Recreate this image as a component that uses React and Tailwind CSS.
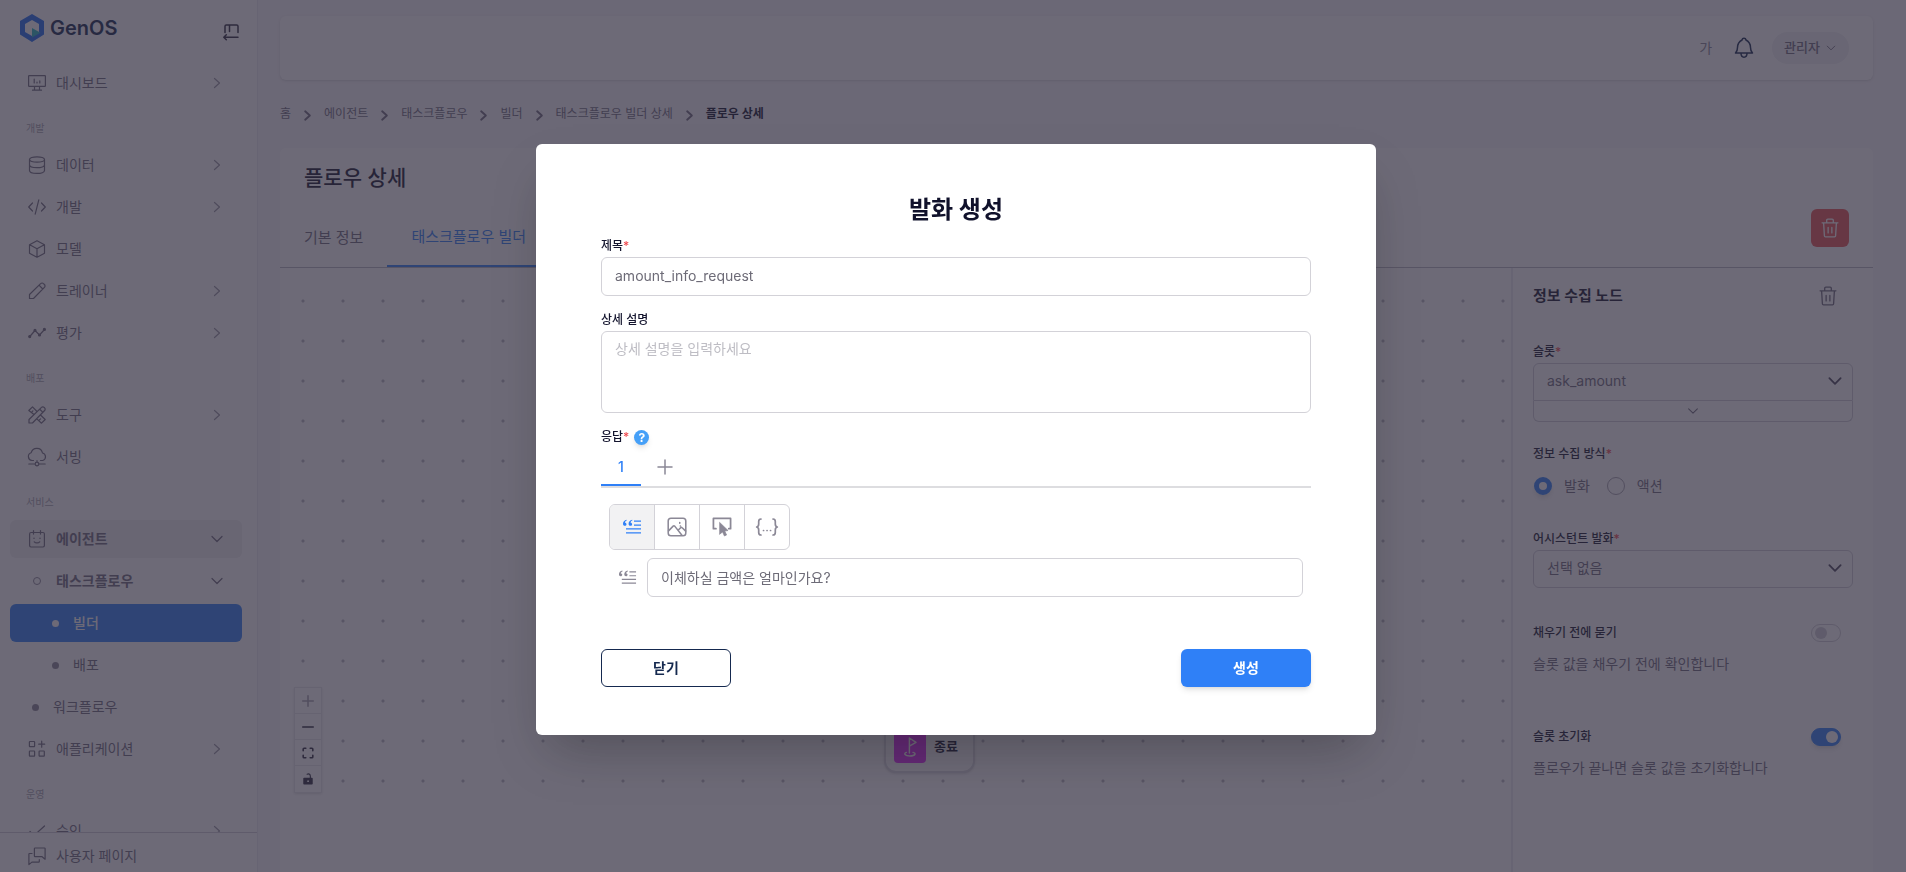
import React, { useState } from "react";
import clsx from "clsx";

const Icon = ({ children, className = "w-5 h-5", box = 20, sw = 1.2 }) => (
    <svg viewBox={`0 0 ${box} ${box}`} className={clsx("shrink-0", className)} fill="none" stroke="currentColor" strokeWidth={sw} strokeLinecap="round" strokeLinejoin="round" aria-hidden="true">
        {children}
    </svg>
);

const icons = {
    dashboard: <path d="M2.2 2.6h15.6a.6.6 0 0 1 .6.6v9.6a.6.6 0 0 1-.6.6H2.2a.6.6 0 0 1-.6-.6V3.2a.6.6 0 0 1 .6-.6zM7.5 13.5V17M12.500 13.500v3.500M5.500 17.200h9M7.200 6v4M10 9v1M12.800 7.800v2.200" />,
    data: <path d="M2.500 4.500c0-1.700 3.300-2.700 7.500-2.700s7.500 1 7.500 2.700-3.300 2.700-7.500 2.700-7.500-1-7.500-2.700zv11c0 1.700 3.300 2.900 7.500 2.900s7.500-1.200 7.500-2.900v-11M2.500 9.800c0 1.700 3.300 2.900 7.500 2.900s7.500-1.200 7.500-2.900" />,
    code: <path d="M5.500 6 1.700 10l3.800 4M14.500 6l3.800 4-3.800 4M11.800 2.800 8.200 17.200" />,
    cube: <path d="M10 1.700 17.500 5.700v8.600L10 18.300 2.500 14.300V5.700zM2.700 5.800 10 9.700l7.300-3.900M10 9.700v8.400" />,
    pencil: <path d="M2.500 17.500v-4L13.600 2.600a2 2 0 0 1 2.900 0l.9.9a2 2 0 0 1 0 2.900L6.500 17.500zM12 4.200l3.800 3.800" />,
    chart: (
        <>
            <path d="M2.800 13.500 8 7.500l4.500 4.500 5-5.500" />
            <g fill="currentColor"><circle cx="2.700" cy="13.600" r="1" /><circle cx="8" cy="7.400" r="1" /><circle cx="12.500" cy="12" r="1" /><circle cx="17.400" cy="6.400" r="1" /></g>
        </>
    ),
    tools: <path d="M2 18v-3.500L14.500 2.400a1.800 1.800 0 0 1 2.600 0l.5.500a1.800 1.800 0 0 1 0 2.600L5.500 18zM7 9.500 1.800 5.500 5.500 1.800 10 6.500M4.500 7.300l1.400-1.400M13.500 10l4.700 4.500-3.700 3.700-4.700-4.300M12.200 15.200l1.400-1.400M13 4.500l2.700 2.700" />,
    cloud: <path d="M6.500 13.500H5a4 4 0 0 1-.8-7.800A5.800 5.800 0 0 1 15.500 6a3.900 3.900 0 0 1 .3 7.500h-2.300M1.800 17h6.300M11.900 17h6.300M10 13.500v1.700M8.200 17a1.800 1.800 0 1 0 3.600 0 1.800 1.800 0 1 0-3.600 0z" />,
    agent: <path d="M4 3.500h12a1.400 1.400 0 0 1 1.400 1.400v11.700A1.400 1.400 0 0 1 16 18H4a1.400 1.400 0 0 1-1.400-1.400V4.900A1.400 1.400 0 0 1 4 3.500zM6.500 1.500v3.600M13.500 1.500v3.600M7 9v.4M13 9v.4M7.300 12.800c1.300 1.500 4.100 1.500 5.400 0" />,
    apps: <path d="M3 2.500h4a.6.6 0 0 1 .6.6v4a.6.6 0 0 1-.6.600H3a.6.6 0 0 1-.6-.6v-4a.6.6 0 0 1 .6-.6zM3 12h4a.6.6 0 0 1 .6.6v4a.6.6 0 0 1-.6.600H3a.6.6 0 0 1-.6-.6v-4a.6.6 0 0 1 .6-.6zM12.700 12h4a.6.6 0 0 1 .6.6v4a.6.6 0 0 1-.6.600h-4a.6.6 0 0 1-.6-.6v-4a.6.6 0 0 1 .6-.6zM14.700 2.200v6M11.700 5.200h6" />,
    check: <path d="m3 10.500 4 4L17.500 5" />,
    chat: <path d="M8 2h9.500a.6.6 0 0 1 .6.6v10.600l-3-2.500H8a.6.6 0 0 1-.6-.6V2.600A.6.600 0 0 1 8 2zM5 7.500H2.500a.6.6 0 0 0-.6.6v10.500l3-2.500h6.800a.6.6 0 0 0 .6-.6v-1.800" />,
    trash: <path d="M2.800 5.300h14.400M7 5V3a1 1 0 0 1 1-1h4a1 1 0 0 1 1 1v2M4.200 5.500l.7 11.600a1 1 0 0 0 1 1h8.200a1 1 0 0 0 1-1l.7-11.600M8.300 9.500v5M11.700 9.500v5" />,
};

const Quote = ({ className }) => (
    <svg viewBox="0 0 20 20" className={clsx("shrink-0", className)} fill="currentColor" aria-hidden="true">
        <path d="M4.600 2.700C2.400 3.200 1 4.700 1 6.700 1 8 1.700 8.800 2.800 8.800c1 0 1.700-.7 1.700-1.600S3.900 5.700 3 5.700c0-1 .7-1.700 1.800-2.100zM10.200 2.700C8 3.200 6.600 4.700 6.600 6.700c0 1.300.7 2.100 1.800 2.100 1 0 1.700-.7 1.700-1.600s-.6-1.500-1.500-1.500c0-1 .7-1.700 1.800-2.100z" />
        <path d="M12 3.500h7v1.200h-7zM12 7.500h7v1.200h-7zM4 11.300h15v1.200H4zM4 15.300h15v1.200H4z" />
    </svg>
);

const Chevron = ({ dir = "right", className = "w-4 h-4", sw = 1.2 }) => (
    <Icon box={16} className={className} sw={sw}>
        <path d={dir === "right" ? "M5.500 3.500 10.500 8l-5 4.500" : "M3 5.500 8 10.500l5-5"} />
    </Icon>
);

const menu = [
    { label: "대시보드", icon: "dashboard", arrow: "right" },
    { section: "개발" },
    { label: "데이터", icon: "data", arrow: "right" },
    { label: "개발", icon: "code", arrow: "right" },
    { label: "모델", icon: "cube" },
    { label: "트레이너", icon: "pencil", arrow: "right" },
    { label: "평가", icon: "chart", arrow: "right" },
    { section: "배포" },
    { label: "도구", icon: "tools", arrow: "right" },
    { label: "서빙", icon: "cloud" },
    { section: "서비스" },
    { label: "에이전트", icon: "agent", arrow: "down", open: true },
    { label: "태스크플로우", ring: true, arrow: "down" },
    { label: "빌더", dot: "deep", active: true },
    { label: "배포", dot: "deep" },
    { label: "워크플로우", dot: "top" },
    { label: "애플리케이션", icon: "apps", arrow: "right" },
    { section: "운영" },
    { label: "승인", icon: "check", arrow: "right" },
];

const MenuItem = ({ item }) => (
    <a
        href="#"
        className={clsx(
            "flex items-center h-[38px] shrink-0 px-[17px] rounded-md text-sm",
            item.active ? "bg-[#2f80f7] text-white font-medium" : "text-[#6f6b7d]",
            item.open && "bg-[#f0f0f1]",
            item.arrow === "down" && "font-bold text-[#4b475c]"
        )}
    >
        {item.icon && <Icon className="w-5 h-5 mr-[9px]">{icons[item.icon]}</Icon>}
        {item.ring && <span className="w-2 h-2 rounded-full border border-[#8b8896] ml-1.5 mr-[15px]" />}
        {item.dot && (
            <span
                className={clsx(
                    "w-[7px] h-[7px] rounded-full mr-3.5",
                    item.dot === "deep" ? "ml-[25px]" : "ml-[5px]",
                    item.active ? "bg-white" : "bg-[#8b8896]"
                )}
            />
        )}
        <span className="flex-1">{item.label}</span>
        {item.arrow && <Chevron dir={item.arrow} className={clsx("w-4 h-4", item.arrow === "right" && "text-[#9a98a4]")} />}
    </a>
);

const Sidebar = () => (
    <aside className="w-[258px] shrink-0 h-full flex flex-col bg-white border-r border-[#ececf0]">
        <div className="flex items-center justify-between h-16 shrink-0 pl-5 pr-4 pb-2">
            <a href="#" className="flex items-center gap-1.5 text-xl font-semibold text-[#15294f]">
                <svg viewBox="0 0 24 28" className="w-6 h-7" aria-hidden="true">
                    <path d="M12 0 24 7v13.500L12 28 0 20.500V7zM12 6 5 10v8l7 4 7-4v-8z" fill="#1f6df2" fillRule="evenodd" />
                    <path d="M12 14 20.500 18.700 12 23.500z" fill="#27b8c4" />
                </svg>
                GenOS
            </a>
            <button type="button" aria-label="메뉴 접기" className="text-[#2c2a3c] mt-2">
                <Icon className="w-5 h-5" sw={1.5}>
                    <path d="M4 10.500V4.300A1.300 1.300 0 0 1 5.300 3h10.400A1.300 1.300 0 0 1 17 4.300v6.200M8.500 3v6.500M17 15.200H3M5.300 12.700 2.800 15.200l2.500 2.500" />
                </Icon>
            </button>
        </div>
        <nav className="flex-1 min-h-0 overflow-hidden flex flex-col gap-1 pl-2.5 pr-[15px]">
            {menu.map((item, i) =>
                item.section ? (
                    <p key={i} className="h-9 shrink-0 flex items-center pt-2 pl-4 text-[10px] text-[#a5a3ae]">{item.section}</p>
                ) : (
                    <MenuItem key={i} item={item} />
                )
            )}
        </nav>
        <a href="#" className="flex items-center gap-[9px] h-10 pt-1.5 shrink-0 pl-[27px] border-t border-[#cfced5] text-sm text-[#6f6b7d]">
            <Icon>{icons.chat}</Icon>
            사용자 페이지
        </a>
    </aside>
);

const Header = () => (
    <header className="h-16 shrink-0 flex items-center justify-end pr-6 bg-white rounded-md shadow">
        <button type="button" className="text-sm text-[#8b8896]">가</button>
        <button type="button" aria-label="알림" className="ml-5 text-[#15294f]">
            <Icon className="w-6 h-6" box={24} sw={1.5}>
                <path d="M3.500 17h17c-1.600-1.500-2-3-2-5.500C18.500 7.200 16.500 5.400 14 4 13.800 2.900 13 2.300 12 2.300S10.200 2.900 10 4c-2.500 1.400-4.500 3.200-4.500 7.500 0 2.500-.4 4-2 5.500zM9 17.300c0 2.400 1.200 3.900 3 3.900s3-1.500 3-3.900" />
            </Icon>
        </button>
        <button type="button" className="ml-4 h-8 flex items-center gap-[5px] px-3 rounded-full bg-[#f0f0f3] text-[13px] font-medium text-[#6f6b7d]">
            관리자
            <Chevron dir="down" className="w-3 h-3" />
        </button>
    </header>
);

const crumbs = ["홈", "에이전트", "태스크플로우", "빌더", "태스크플로우 빌더 상세", "플로우 상세"];

const Breadcrumb = () => (
    <nav aria-label="경로" className="mt-6 h-5 flex items-center text-xs text-[#6f6b7d]">
        {crumbs.map((c, i) => (
            <React.Fragment key={c}>
                {i > 0 && <Chevron className="w-[15px] h-[15px] mx-[9px] mt-0.5" sw={2} />}
                {i === crumbs.length - 1 ? <span className="font-bold text-[#10112b]">{c}</span> : <a href="#">{c}</a>}
            </React.Fragment>
        ))}
    </nav>
);

const Label = ({ children, required, ...rest }) => (
    <label {...rest} className="block text-xs leading-[18px] font-medium text-[#14152e]">
        {children}
        {required && <span className="text-[#f04b50]">*</span>}
    </label>
);

const SelectBox = ({ id, children, className }) => (
    <div className="relative">
        <select id={id} className={clsx("block appearance-none w-full h-[38px] px-[13px] pb-0.5 border border-[#cfced5] bg-white text-[#6f6b7d]", className)}>
            {children}
        </select>
        <Chevron dir="down" sw={1.6} className="w-[18px] h-[18px] absolute right-[9px] top-[9px] text-[#4b475c] pointer-events-none" />
    </div>
);

const Toggle = ({ id, ...rest }) => (
    <input
        id={id}
        type="checkbox"
        {...rest}
        className="appearance-none w-[30px] h-[18px] mr-3 rounded-full border border-[#cfced5] flex items-center px-[3px] before:w-3 before:h-3 before:rounded-full before:bg-[#cfced5] checked:bg-[#2f80f7] checked:border-[#2f80f7] checked:justify-end checked:before:bg-white checked:px-0.5 checked:shadow-md"
    />
);

const NodePanel = () => (
    <aside className="w-[362px] shrink-0 bg-white border-l-2 border-[#ececf0] px-5 text-sm text-[#6f6b7d]">
        <div className="flex items-center justify-between pt-4 pr-3.5">
            <h2 className="text-[15px] leading-6 font-bold text-[#14152e]">정보 수집 노드</h2>
            <button type="button" aria-label="노드 삭제"><Icon className="w-[22px] h-[22px]">{icons.trash}</Icon></button>
        </div>
        <div className="mt-[35px]">
            <Label htmlFor="slot" required>슬롯</Label>
            <div className="mt-0.5">
                <SelectBox id="slot" className="rounded-t-md">
                    <option>ask_amount</option>
                </SelectBox>
                <button type="button" aria-label="펼치기" className="w-full h-[21px] flex items-center justify-center border border-t-0 border-[#cfced5] rounded-b-md">
                    <Chevron dir="down" className="w-3.5 h-3.5" />
                </button>
            </div>
        </div>
        <fieldset className="mt-[23px]">
            <legend className="text-xs leading-[18px] font-medium text-[#14152e]">정보 수집 방식<span className="text-[#f04b50]">*</span></legend>
            <div className="mt-3.5 flex items-center h-[18px]">
                {["발화", "액션"].map((v, i) => (
                    <label key={v} className="flex items-center gap-3 ml-px mr-4">
                        <input type="radio" name="method" defaultChecked={i === 0} className="appearance-none w-[18px] h-[18px] rounded-full border border-[#a5a3ae] checked:border-[5px] checked:border-[#2f80f7] checked:shadow-md" />
                        {v}
                    </label>
                ))}
            </div>
        </fieldset>
        <div className="mt-[35px]">
            <Label htmlFor="utter" required>어시스턴트 발화</Label>
            <div className="mt-0.5">
                <SelectBox id="utter" className="rounded-md">
                    <option>선택 없음</option>
                </SelectBox>
            </div>
        </div>
        <div className="mt-9">
            <div className="flex items-center justify-between">
                <Label htmlFor="ask-before">채우기 전에 묻기</Label>
                <Toggle id="ask-before" />
            </div>
            <p className="mt-3 leading-5">슬롯 값을 채우기 전에 확인합니다</p>
        </div>
        <div className="mt-[54px]">
            <div className="flex items-center justify-between">
                <Label htmlFor="reset">슬롯 초기화</Label>
                <Toggle id="reset" defaultChecked />
            </div>
            <p className="mt-3 leading-5">플로우가 끝나면 슬롯 값을 초기화합니다</p>
        </div>
    </aside>
);

const controls = [
    { label: "확대", icon: <path d="M8 2v12M2 8h12" />, off: true },
    { label: "축소", icon: <path d="M2 8h12" /> },
    { label: "화면 맞춤", icon: <path d="M2.500 5.500v-2a1 1 0 0 1 1-1h2M10.500 2.500h2a1 1 0 0 1 1 1v2M13.500 10.500v2a1 1 0 0 1-1 1h-2M5.500 13.500h-2a1 1 0 0 1-1-1v-2" /> },
    { label: "잠금", icon: <><rect x="3.500" y="7.500" width="9" height="6" fill="currentColor" /><path d="M7 2.500c2.500-1 3.700.3 3.700 2.500V7" strokeWidth="1.300" /><circle cx="8" cy="10.500" r=".6" fill="#fff" stroke="#fff" strokeWidth="1" /></> },
];

const Canvas = () => (
    <div className="relative flex-1 h-[540px] bg-[radial-gradient(circle_at_23px_33px,#b9b8c2_1px,transparent_2px)] bg-[size:40px_40px]">
        <div className="absolute left-3.5 bottom-[15px] flex flex-col bg-white border border-[#e6e6ec] divide-y divide-[#e6e6ec] shadow-sm">
            {controls.map((c) => (
                <button key={c.label} type="button" aria-label={c.label} className={clsx("w-[26px] h-[26px] flex items-center justify-center", c.off ? "text-[#a5a3ae]" : "text-[#2c2a3c]")}>
                    <Icon box={16} className="w-3.5 h-3.5" sw={1.8}>{c.icon}</Icon>
                </button>
            ))}
        </div>
        <div className="absolute left-[604px] top-[453px] w-[91px] h-[52px] flex items-center gap-2 pl-2 bg-white border-2 border-[#dcdbe1] rounded-xl shadow">
            <span className="w-8 h-8 rounded flex items-center justify-center bg-fuchsia-500 text-white">
                <Icon className="w-6 h-6"><path d="M9.500 15V2.500l5.500 3.700-5.500 3M7 14.500c-2.500.7-1.500 3 3 3s5.500-2.300 2.500-3" /></Icon>
            </span>
            <span className="text-[13px] font-bold text-[#14152e]">종료</span>
        </div>
    </div>
);

const inputStyle = "block w-full h-[39px] px-[13px] pb-0.5 border border-[#d3d2d8] rounded-md text-[#6d6b77] outline-none";

const responseTypes = [
    { label: "텍스트", icon: <Quote className="w-5 h-5" /> },
    { label: "이미지", icon: <Icon sw={1.4} className="w-[22px] h-[22px]"><rect x="2" y="2" width="16" height="16" rx="2.500" /><path d="m2.300 13.500 4.200-4.300a1 1 0 0 1 1.400 0l6.600 8.300M11 13l2.300-2.300a1 1 0 0 1 1.400 0l3.200 3M12.500 6v.6M13 9h.1" /></Icon> },
    { label: "버튼", icon: <Icon sw={1.6} className="w-[22px] h-[22px]"><path d="M4.500 11.500H2.200V2.200h15.600v9.300h-1.600" /><path d="m8 6 7.500 7.200-3 .5 1.700 3.500-2 1-1.700-3.700L8 16.500z" fill="currentColor" strokeWidth=".6" /></Icon> },
    { label: "JSON", icon: <Icon box={24} sw={1.7} className="w-6 h-6"><path d="M6 4c-2 0-2.300.8-2.300 2.500V9c0 1.700-.5 2.700-2 3 1.500.3 2 1.300 2 3v2.500C3.700 19.200 4 20 6 20M18 4c2 0 2.300.8 2.300 2.500V9c0 1.700.5 2.700 2 3-1.500.3-2 1.300-2 3v2.500c0 1.700-.3 2.500-2.300 2.500M8.500 15.500h.1M12 15.500h.1M15.500 15.500h.1" /></Icon> },
];

const UtteranceModal = () => {
    const [title, setTitle] = useState("amount_info_request");
    const [text, setText] = useState("이체하실 금액은 얼마인가요?");
    const [type, setType] = useState(0);

    return (
        <div className="fixed inset-0 z-50 flex items-center justify-center pl-1.5 pt-[7px] bg-[#2f2b3d]/70">
            <div role="dialog" aria-modal="true" aria-labelledby="modal-title" className="w-[840px] max-w-full px-[65px] py-12 bg-white rounded-md text-sm shadow-2xl">
                <h2 id="modal-title" className="text-2xl leading-9 font-bold text-center text-[#10112b]">발화 생성</h2>

                <div className="mt-[9px] flex flex-col gap-0.5">
                    <Label htmlFor="title" required>제목</Label>
                    <input id="title" value={title} onChange={(e) => setTitle(e.target.value)} className={inputStyle} />
                </div>

                <div className="mt-[15px] flex flex-col gap-0.5">
                    <Label htmlFor="desc">상세 설명</Label>
                    <textarea id="desc" placeholder="상세 설명을 입력하세요" className="block w-full h-[82px] px-[13px] py-1.5 leading-[22px] border border-[#d3d2d8] rounded-md resize-none outline-none placeholder:text-[#bebdc4]" />
                </div>

                <div className="mt-4 flex items-center gap-[5px] h-4">
                    <Label required>응답</Label>
                    <button type="button" aria-label="도움말" className="w-[15px] h-[15px] rounded-full bg-[#45a0f8] text-white text-xs leading-[15px] font-bold text-center shadow-md">?</button>
                </div>

                {/* Response tabs */}
                <div className="mt-1 h-[39px] flex border-b-2 border-[#dddde0]">
                    <button type="button" className="w-10 border-b-2 border-[#2f80f7] font-medium text-[#2f80f7]">1</button>
                    <button type="button" aria-label="응답 추가" className="ml-4 pb-0.5 text-[#8b8896]">
                        <Icon box={16} className="w-4 h-4" sw={1.5}><path d="M8 1v14M1 8h14" /></Icon>
                    </button>
                </div>

                <div className="px-2 pt-4">
                    <div className="w-[181px] h-[46px] flex border border-[#d3d2d8] rounded-md overflow-hidden divide-x divide-[#d3d2d8]">
                        {responseTypes.map((r, i) => (
                            <button key={r.label} type="button" aria-label={r.label} onClick={() => setType(i)} className={clsx("flex-1 flex items-center justify-center", type === i ? "bg-[#f2f2f3] text-[#2f80f7]" : "text-[#8b8896]")}>
                                {r.icon}
                            </button>
                        ))}
                    </div>
                    <div className="mt-2 flex items-center gap-2.5 pl-[9px]">
                        <Quote className="w-[19px] h-[19px] text-[#8b8896]" />
                        <input aria-label="응답 텍스트" value={text} onChange={(e) => setText(e.target.value)} className={inputStyle} />
                    </div>
                </div>

                <div className="mt-[52px] flex justify-between font-bold">
                    <button type="button" className="w-[130px] h-[38px] rounded-md border border-[#15294f] text-[#15294f]">닫기</button>
                    <button type="button" className="w-[130px] h-[38px] rounded-md bg-[#2f80f7] text-white shadow-md">생성</button>
                </div>
            </div>
        </div>
    );
};

const App = () => (
    <div className="h-screen flex overflow-hidden bg-[#f8f7fa] font-['Inter','Noto_Sans_CJK_KR',sans-serif]">
        <Sidebar />
        <main className="flex-1 min-w-0 flex flex-col pl-[22px] pr-[33px] pt-4">
            <Header />
            <Breadcrumb />
            <section className="mt-6 flex-1 min-h-0 flex flex-col bg-white rounded-t-md">
                <div className="relative h-[120px] shrink-0 flex flex-col justify-between border-b border-[#b9b8c2]">
                    <h1 className="pt-3.5 pl-6 text-[21px] leading-8 font-medium text-[#14152e]">플로우 상세</h1>
                    <div className="flex text-[15px]">
                        <button type="button" className="h-[58px] px-6 text-[#6f6b7d]">기본 정보</button>
                        <button type="button" className="h-[58px] px-6 border-b-2 border-[#2f80f7] text-[#2f80f7]">태스크플로우 빌더</button>
                    </div>
                    <button type="button" aria-label="플로우 삭제" className="absolute right-6 bottom-5 w-[38px] h-[38px] flex items-center justify-center rounded-md bg-[#ea5455] text-white">
                        <Icon className="w-[22px] h-[22px]">{icons.trash}</Icon>
                    </button>
                </div>
                <div className="flex-1 min-h-0 flex">
                    <Canvas />
                    <NodePanel />
                </div>
            </section>
        </main>
        <UtteranceModal />
    </div>
);

export default App;
